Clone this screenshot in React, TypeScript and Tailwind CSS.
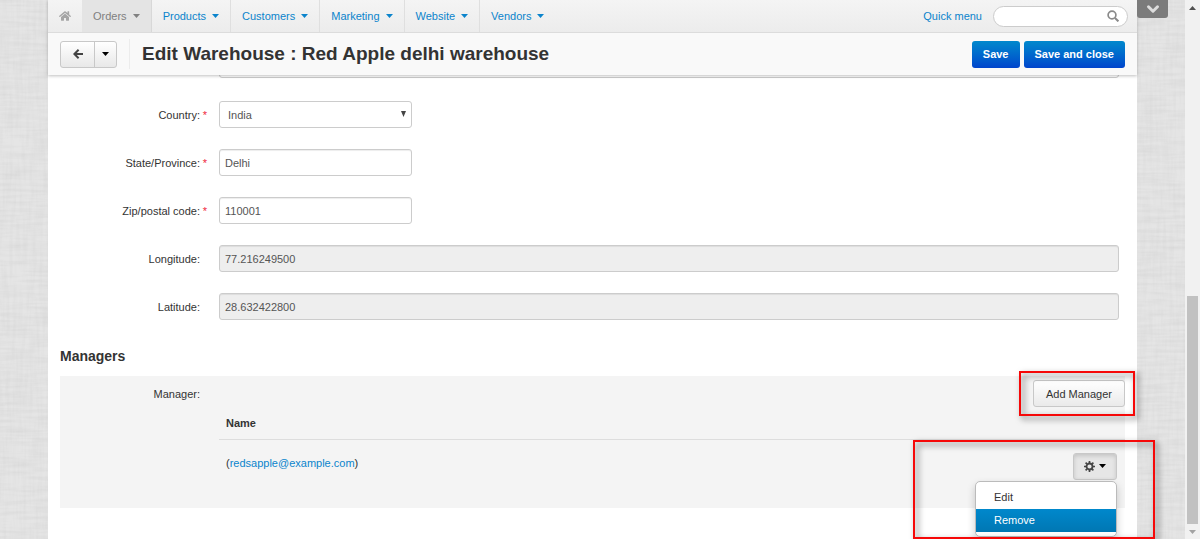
import { FaHome } from "react-icons/fa";
import { ChevronDown } from "lucide-react";

const menus = ["Products", "Customers", "Marketing", "Website", "Vendors"];

const Caret = () => (
  <svg width="7" height="4" viewBox="0 0 7 4" fill="currentColor" className="shrink-0" aria-hidden="true">
    <path d="M0 0h7L3.5 4z" />
  </svg>
);

const Arrow = () => (
  <svg width="10" height="10" viewBox="0 0 10 10" fill="none" stroke="#444" strokeWidth="2" aria-hidden="true">
    <path d="M5.6.8 1.4 5l4.2 4.2M1.6 5H10" />
  </svg>
);

const Gear = () => (
  <svg width="11" height="11" viewBox="0 0 11 11" fill="none" stroke="#444" aria-hidden="true">
    <circle cx="5.5" cy="5.5" r="3" strokeWidth="1.8" />
    <path strokeWidth="1.7" d="M5.5 0v2M5.5 9v2M0 5.5h2M9 5.5h2M1.6 1.6l1.4 1.4M8 8l1.4 1.4M1.6 9.4 3 8M8 3l1.4-1.4" />
  </svg>
);

const Magnifier = () => (
  <svg width="12" height="12" viewBox="0 0 12 12" fill="none" stroke="#8a8a8a" className="absolute right-[9px] top-1" aria-hidden="true">
    <circle cx="5" cy="5" r="3.9" strokeWidth="1.7" />
    <path d="m8 8 3.4 3.4" strokeWidth="2" />
  </svg>
);

// woven texture behind the page
const Linen = () => (
  <svg className="absolute inset-0 h-full w-full" aria-hidden="true">
    <filter id="weft" x="0" y="0" width="100%" height="100%">
      <feTurbulence type="fractalNoise" baseFrequency="0.03 0.3" numOctaves="2" seed="4" />
      <feColorMatrix values="0 0 0 0 0.5  0 0 0 0 0.5  0 0 0 0 0.5  0.4 0 0 0 -0.14" />
    </filter>
    <filter id="warp" x="0" y="0" width="100%" height="100%">
      <feTurbulence type="fractalNoise" baseFrequency="0.3 0.03" numOctaves="2" seed="9" />
      <feColorMatrix values="0 0 0 0 0.5  0 0 0 0 0.5  0 0 0 0 0.5  0.25 0 0 0 -0.09" />
    </filter>
    <rect width="100%" height="100%" filter="url(#weft)" />
    <rect width="100%" height="100%" filter="url(#warp)" />
  </svg>
);

const Label = ({ id, text, required }: any) => (
  <label htmlFor={id} className="relative w-[140px] shrink-0 text-right text-[#333]">
    {text}:
    {required && <span className="absolute -right-[7px] top-0 text-[#f0283c]">*</span>}
  </label>
);

const Field = ({ id, text, value, required, disabled }: any) => (
  <div className="flex h-[27px] items-center gap-[19px]">
    <Label id={id} text={text} required={required} />
    <input
      id={id}
      defaultValue={value}
      disabled={disabled}
      className={`h-full rounded-[3px] border border-[#ccc] px-[5px] text-[#555] shadow-[inset_0_1px_1px_rgba(0,0,0,0.075)] ${disabled ? "flex-1 bg-[#eee]" : "w-[193px] bg-white"}`}
    />
  </div>
);

const ScrollBar = () => (
  <aside className="relative z-40 flex w-[15px] shrink-0 flex-col items-center bg-[#f1f1f1]">
    <div className="flex h-[15px] items-center text-[#505050]">
      <svg width="7" height="4" viewBox="0 0 7 4" fill="currentColor"><path d="M0 4h7L3.5 0z" /></svg>
    </div>
    <div className="grow-[280]" />
    <div className="w-[11px] grow-[228] bg-[#c1c1c1]" />
    <div className="flex h-[15px] items-center text-[#a3a3a3]">
      <Caret />
    </div>
  </aside>
);

const App = () => {
  return (
    <div className="flex h-screen overflow-hidden bg-[#e5e5e5] font-['Liberation_Sans',Arial,sans-serif] text-[11px] leading-4 text-[#333]">
      <div className="relative min-w-0 flex-1 px-12">
        <Linen />
        <button aria-label="Expand" className="absolute right-[17px] top-0 z-30 flex h-[18px] w-[31px] items-center justify-center rounded-b-[3px] bg-[#7b7b7b] text-[#ddd]">
          <ChevronDown size={18} strokeWidth={4} />
        </button>

        <div className="relative flex h-full flex-col bg-white">
          <header className="relative z-20 bg-[#f9f9f9] shadow-[0_1px_3px_rgba(0,0,0,0.25)]">
            <nav className="flex h-[33px] items-stretch border-b border-[#dcdcdc] bg-linear-to-b from-[#f4f4f4] to-[#ececec] text-[#0b84cc]">
              <a href="#" aria-label="Home" className="flex w-[34px] items-center justify-center text-[#a5a5a5]">
                <FaHome size={12} />
              </a>
              <a href="#" className="flex items-center gap-[6px] border-r border-[#d8d8d8] bg-[#e4e4e4] px-[11px] text-[#808080]">
                Orders <Caret />
              </a>
              {menus.map((name, i) => (
                <a key={name} href="#" className={`flex items-center gap-[6px] px-[11px] ${i < menus.length - 1 ? "border-r border-[#dfdfdf]" : ""}`}>
                  {name} <Caret />
                </a>
              ))}
              <div className="ml-auto flex items-center gap-[11px] pr-[9px]">
                <a href="#">Quick menu</a>
                <div className="relative">
                  <input type="search" aria-label="Search" className="block h-[21px] w-[135px] rounded-full border border-[#ccc] bg-white pl-3 pr-7" />
                  <Magnifier />
                </div>
              </div>
            </nav>

            <div className="flex h-[42px] items-center px-3">
              <div className="flex h-[27px] rounded-[3px] border border-[#c8c8c8] bg-linear-to-b from-white to-[#e8e8e8]">
                <button aria-label="Back" className="flex w-[34px] items-center justify-center border-r border-[#c8c8c8]">
                  <Arrow />
                </button>
                <button aria-label="More" className="flex w-[21px] items-center justify-center text-black">
                  <Caret />
                </button>
              </div>
              <div className="ml-3 h-[30px] border-l border-[#ececec]" />
              <h1 className="ml-3 text-[19px] font-bold leading-6">Edit Warehouse : Red Apple delhi warehouse</h1>
              <div className="ml-auto flex gap-1 font-bold text-white">
                <button className="h-[27px] rounded-[3px] bg-linear-to-b from-[#0088cc] to-[#0044cc] px-[11px]">Save</button>
                <button className="h-[27px] rounded-[3px] bg-linear-to-b from-[#0088cc] to-[#0044cc] px-[11px]">Save and close</button>
              </div>
            </div>
          </header>

          <main className="px-3">
            {/* address line, mostly scrolled under the header */}
            <div className="-mt-6 mb-[23px] flex h-[27px] pl-[159px] pr-[6px]">
              <input aria-label="Address" className="w-full rounded-[3px] border border-[#ccc] bg-white" />
            </div>

            <form className="flex flex-col gap-[21px] pr-[6px]">
              <div className="flex h-[27px] items-center gap-[19px]">
                <Label id="country" text="Country" required />
                <div className="relative h-full w-[193px]">
                  <select id="country" className="h-full w-full appearance-none rounded-[3px] border border-[#ccc] bg-white px-2 text-[#555]">
                    <option>India</option>
                  </select>
                  <svg width="5" height="6" viewBox="0 0 5 6" className="pointer-events-none absolute right-[6px] top-[10px] fill-[#444]">
                    <path d="M0 0h5L2.5 6z" />
                  </svg>
                </div>
              </div>
              <Field id="state" text="State/Province" value="Delhi" required />
              <Field id="zip" text="Zip/postal code" value="110001" required />
              <Field id="longitude" text="Longitude" value="77.216249500" disabled />
              <Field id="latitude" text="Latitude" value="28.632422800" disabled />
            </form>

            <h2 className="mb-[11px] mt-[27px] text-[14px] font-bold leading-[18px]">Managers</h2>

            <section className="h-[132px] bg-[#f4f4f4] pt-1">
              <div className="flex h-[27px] items-center justify-between">
                <span className="w-[140px] text-right">Manager:</span>
                <div className="relative">
                  <button className="h-[27px] rounded-[3px] border border-[#c8c8c8] bg-linear-to-b from-white to-[#eaeaea] px-3">Add Manager</button>
                  <div className="pointer-events-none absolute -bottom-[9px] -left-[14px] -right-[10px] -top-[9px] border-2 border-[#f60808] drop-shadow-[3px_3px_3px_rgba(0,0,0,0.6)]" />
                </div>
              </div>

              <div className="pl-[159px]">
                <table className="w-full">
                  <thead>
                    <tr className="border-b border-[#ddd]">
                      <th className="h-8 pl-[7px] text-left font-bold">Name</th>
                      <th aria-label="Actions" />
                    </tr>
                  </thead>
                  <tbody>
                    <tr className="h-[52px] align-top">
                      <td className="pl-[7px] pt-[15px]">
                        (<a href="#" className="text-[#0b84cc]">redsapple@example.com</a>)
                      </td>
                      <td className="pr-2 pt-[13px]">
                        <div className="relative ml-auto w-[44px]">
                          <button aria-label="Tools" className="flex h-[27px] w-full items-center justify-center gap-1 rounded-[3px] border border-[#c8c8c8] bg-[#e6e6e6] shadow-[inset_0_2px_4px_rgba(0,0,0,0.15)]">
                            <Gear />
                            <span className="text-black"><Caret /></span>
                          </button>
                          <ul className="absolute right-0 top-[28px] z-10 w-[142px] rounded-[5px] border border-[#bbb] bg-white py-1 shadow-[0_4px_8px_rgba(0,0,0,0.2)]">
                            <li><a href="#" className="block h-[23px] px-[18px] leading-[23px]">Edit</a></li>
                            <li><a href="#" className="block h-[23px] bg-linear-to-b from-[#0088cc] to-[#0077b3] px-[18px] leading-[23px] text-white">Remove</a></li>
                          </ul>
                          <div className="pointer-events-none absolute -bottom-[59px] -left-[160px] -right-[38px] -top-[13px] z-20 border-2 border-[#f60808] drop-shadow-[3px_3px_3px_rgba(0,0,0,0.6)]" />
                        </div>
                      </td>
                    </tr>
                  </tbody>
                </table>
              </div>
            </section>
          </main>
        </div>
      </div>
      <ScrollBar />
    </div>
  );
};

export default App;
